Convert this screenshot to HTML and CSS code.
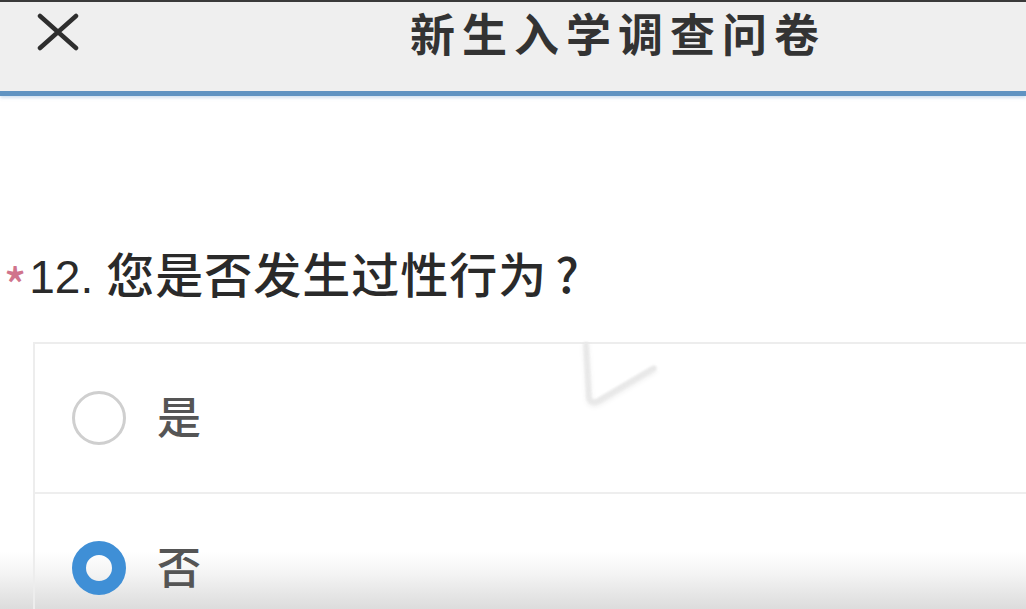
FILE: index.html
```html
<!DOCTYPE html>
<html lang="zh-CN">
<head>
<meta charset="utf-8">
<title>新生入学调查问卷</title>
<link rel="stylesheet" href="styles.css">
</head>
<body>
<div class="page">
  <header class="topbar">
    <span class="close" aria-label="关闭">
      <svg width="46" height="38" viewBox="0 0 46 38"><path d="M5 3 L41 35 M41 3 L5 35" stroke="#2e2e2e" stroke-width="4.5" stroke-linecap="round"/></svg>
    </span>
    <h1 class="title">新生入学调查问卷</h1>
  </header>
  <main class="content">
    <div class="question"><span class="req">*</span><span class="qnum">12.</span><span class="qtext">您是否发生过性行为</span><span class="qmark">?</span></div>
    <div class="options">
      <div class="option">
        <span class="radio"></span><span class="label">是</span>
      </div>
      <div class="option">
        <span class="radio checked"></span><span class="label">否</span>
      </div>
    </div>
  </main>
  <svg class="notch" width="90" height="80" viewBox="0 0 90 80"><path d="M4 2 L7 56 Q9 62 16 59 L72 26" fill="none" stroke="#e8e8e8" stroke-width="5" stroke-linecap="round" stroke-linejoin="round"/></svg>
</div>
</body>
</html>
```
FILE: styles.css
```css
html, body {
  margin: 0;
  padding: 0;
  background: #fff;
}
.page {
  position: relative;
  width: 1026px;
  height: 609px;
  overflow: hidden;
  font-family: "Noto Sans CJK SC", "Noto Sans", sans-serif;
  color: #333;
  background: linear-gradient(to bottom, #ffffff 0, #ffffff 552px, #f3f3f3 575px, #e2e2e2 600px, #dcdcdc 609px);
}
.topbar {
  height: 82px;
  border-top: 2px solid #3a3a3a;
  background: #efefef;
  border-bottom: 5px solid #5f93c2;
  box-shadow: 0 2px 3px rgba(120, 170, 215, 0.35);
  display: flex;
  align-items: flex-start;
  padding: 7px 0 0 35px;
  box-sizing: content-box;
}
.close {
  display: flex;
  width: 46px;
  height: 38px;
  margin-top: 4px;
}
.title {
  margin: 0 0 0 329px;
  font-size: 45px;
  font-weight: 700;
  color: #333;
  letter-spacing: 7px;
  line-height: 48px;
}
.content {
  padding-top: 146px;
}
.question {
  display: flex;
  align-items: baseline;
  font-size: 48px;
  font-weight: 500;
  line-height: 60px;
  color: #2a2a2a;
  padding-left: 4px;
}
.req {
  color: #d0748c;
  font-size: 46px;
  line-height: 1;
  margin-right: 3px;
  transform: translateY(10px);
}
.qnum {
  font-family: "Liberation Sans", "Noto Sans", sans-serif;
  font-weight: 400;
  font-size: 46px;
  margin-right: 13px;
}
.qtext {
  letter-spacing: 1px;
}
.qmark {
  margin-left: 8px;
}
.options {
  margin: 35px 0 0 33px;
  border: 2px solid #ededed;
  border-right: none;
  border-bottom: none;
}
.option {
  height: 148px;
  display: flex;
  align-items: center;
  padding-left: 37px;
}
.option + .option {
  border-top: 2px solid #eeeeee;
}
.radio {
  width: 48px;
  height: 48px;
  border-radius: 50%;
  border: 3px solid #cfcfcf;
  box-sizing: content-box;
  filter: blur(0.6px);
}
.radio.checked {
  width: 26px;
  height: 26px;
  border: 14px solid #3f8fd6;
}
.label {
  margin-left: 31px;
  font-size: 44px;
  font-weight: 500;
  color: #555;
  line-height: 1;
  margin-top: -6px;
}
.notch {
  position: absolute;
  left: 582px;
  top: 342px;
  filter: blur(0.8px) drop-shadow(0 2px 2px rgba(0,0,0,0.08));
}
```
